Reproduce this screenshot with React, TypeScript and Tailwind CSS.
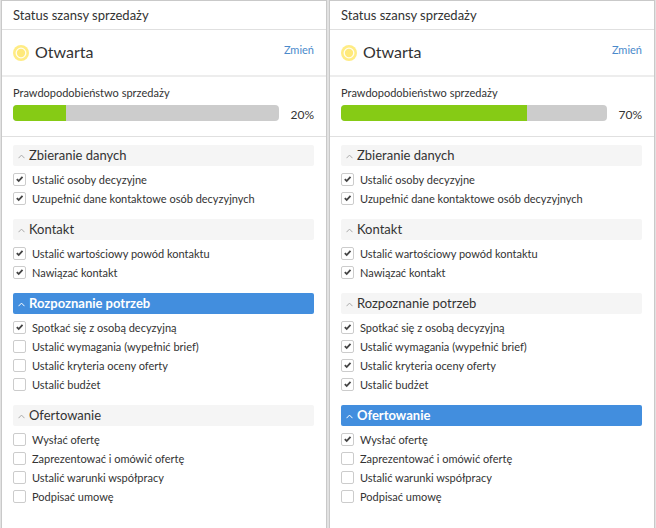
import React from "react";
import clsx from "clsx";

type Step = { label: string; done?: boolean };
type Stage = { title: string; active?: boolean; steps: Step[] };

// first `done` steps are ticked, `active` is the stage in progress
function buildStages(done: number, active: number): Stage[] {
    const stages = [
        { title: "Zbieranie danych", steps: ["Ustalić osoby decyzyjne", "Uzupełnić dane kontaktowe osób decyzyjnych"] },
        { title: "Kontakt", steps: ["Ustalić wartościowy powód kontaktu", "Nawiązać kontakt"] },
        { title: "Rozpoznanie potrzeb", steps: ["Spotkać się z osobą decyzyjną", "Ustalić wymagania (wypełnić brief)", "Ustalić kryteria oceny oferty", "Ustalić budżet"] },
        { title: "Ofertowanie", steps: ["Wysłać ofertę", "Zaprezentować i omówić ofertę", "Ustalić warunki współpracy", "Podpisać umowę"] },
    ];
    let n = 0;
    return stages.map((stage, i) => ({
        title: stage.title,
        active: i === active,
        steps: stage.steps.map(label => ({ label, done: n++ < done })),
    }));
}

function StepRow({ label, done }: Step) {
    return (
        <li>
            <label className="flex h-[19px] items-center gap-1.5 text-[11px]">
                <span className="grid shrink-0">
                    <input type="checkbox" defaultChecked={done} className="peer col-start-1 row-start-1 size-[13px] appearance-none rounded-xs border border-[#ccc] bg-white" />
                    <svg viewBox="0 0 13 13" className="pointer-events-none invisible col-start-1 row-start-1 size-[13px] peer-checked:visible" fill="none" stroke="#444" strokeWidth="1.8">
                        <path d="M3.8 6.2 5.7 8 9.5 3.9" />
                    </svg>
                </span>
                <span className="pt-0.5">{label}</span>
            </label>
        </li>
    );
}

function StageGroup({ title, active, steps }: Stage) {
    const [open, setOpen] = React.useState(true);

    return (
        <section>
            <button
                type="button"
                aria-expanded={open}
                onClick={() => setOpen(!open)}
                className={clsx(
                    "flex h-[21px] w-full items-center gap-1 rounded-xs px-[5px] pt-px text-left text-[13px]",
                    active ? "bg-[#428ede] font-bold text-white" : "bg-[#f5f5f5]"
                )}
            >
                <svg viewBox="0 0 7 5" className={clsx("h-[5px] w-[7px]", active ? "text-white" : "text-[#aaa]", !open && "rotate-180")} fill="none" stroke="currentColor">
                    <path d="M.5 4.2 3.5 1.1 6.5 4.2" />
                </svg>
                {title}
            </button>
            {open && (
                <ul className="mt-1">
                    {steps.map(step => <StepRow key={step.label} {...step} />)}
                </ul>
            )}
        </section>
    );
}

function DealPanel({ percent, stages }: { percent: number; stages: Stage[] }) {
    return (
        <article className="min-w-0 flex-1 border-x border-t border-[#c9c9c9] bg-white">
            <h2 className="flex h-[29px] items-center border-b border-[#e0e0e0] pt-0.5 pr-3 pl-[11px] text-[13px]">Status szansy sprzedaży</h2>
            <div className="flex h-[47px] items-center gap-1.5 border-b-2 border-[#ededed] pr-3 pl-[11px]">
                <svg viewBox="0 0 16 16" className="size-4">
                    <circle cx="8" cy="8" r="8" fill="#ffec84" />
                    <circle cx="8" cy="8" r="4.8" fill="#ffe97a" stroke="#fffdf0" strokeWidth="1.3" />
                </svg>
                <strong className="pb-0.5 text-base font-normal">Otwarta</strong>
                <a href="#zmien" className="ml-auto pb-1 text-[11px] text-[#4a8acb]">Zmień</a>
            </div>
            <div className="h-[60px] border-b border-[#e0e0e0] pt-2 pr-3 pl-[11px]">
                <p className="text-[11px] leading-4">Prawdopodobieństwo sprzedaży</p>
                <div className="mt-1 flex items-start">
                    <div role="progressbar" aria-label="Prawdopodobieństwo sprzedaży" aria-valuenow={percent} className="h-4 flex-1 overflow-hidden rounded-sm bg-[#ccc]">
                        <div className="h-full bg-[#86cb15]" style={{ width: `${percent}%` }} />
                    </div>
                    <span className="w-[35px] pt-0.5 text-right text-xs leading-4">{percent}%</span>
                </div>
            </div>
            <div className="flex flex-col gap-[11px] pt-2 pr-3 pb-5 pl-[11px]">
                {stages.map(stage => <StageGroup key={stage.title} {...stage} />)}
            </div>
        </article>
    );
}

export default function App() {
    return (
        <main className="flex min-h-screen gap-0.5 bg-[#e2e2e2] px-px font-[Lato,'Noto_Sans',sans-serif] text-[#333]">
            <DealPanel percent={20} stages={buildStages(5, 2)} />
            <DealPanel percent={70} stages={buildStages(9, 3)} />
        </main>
    );
}
